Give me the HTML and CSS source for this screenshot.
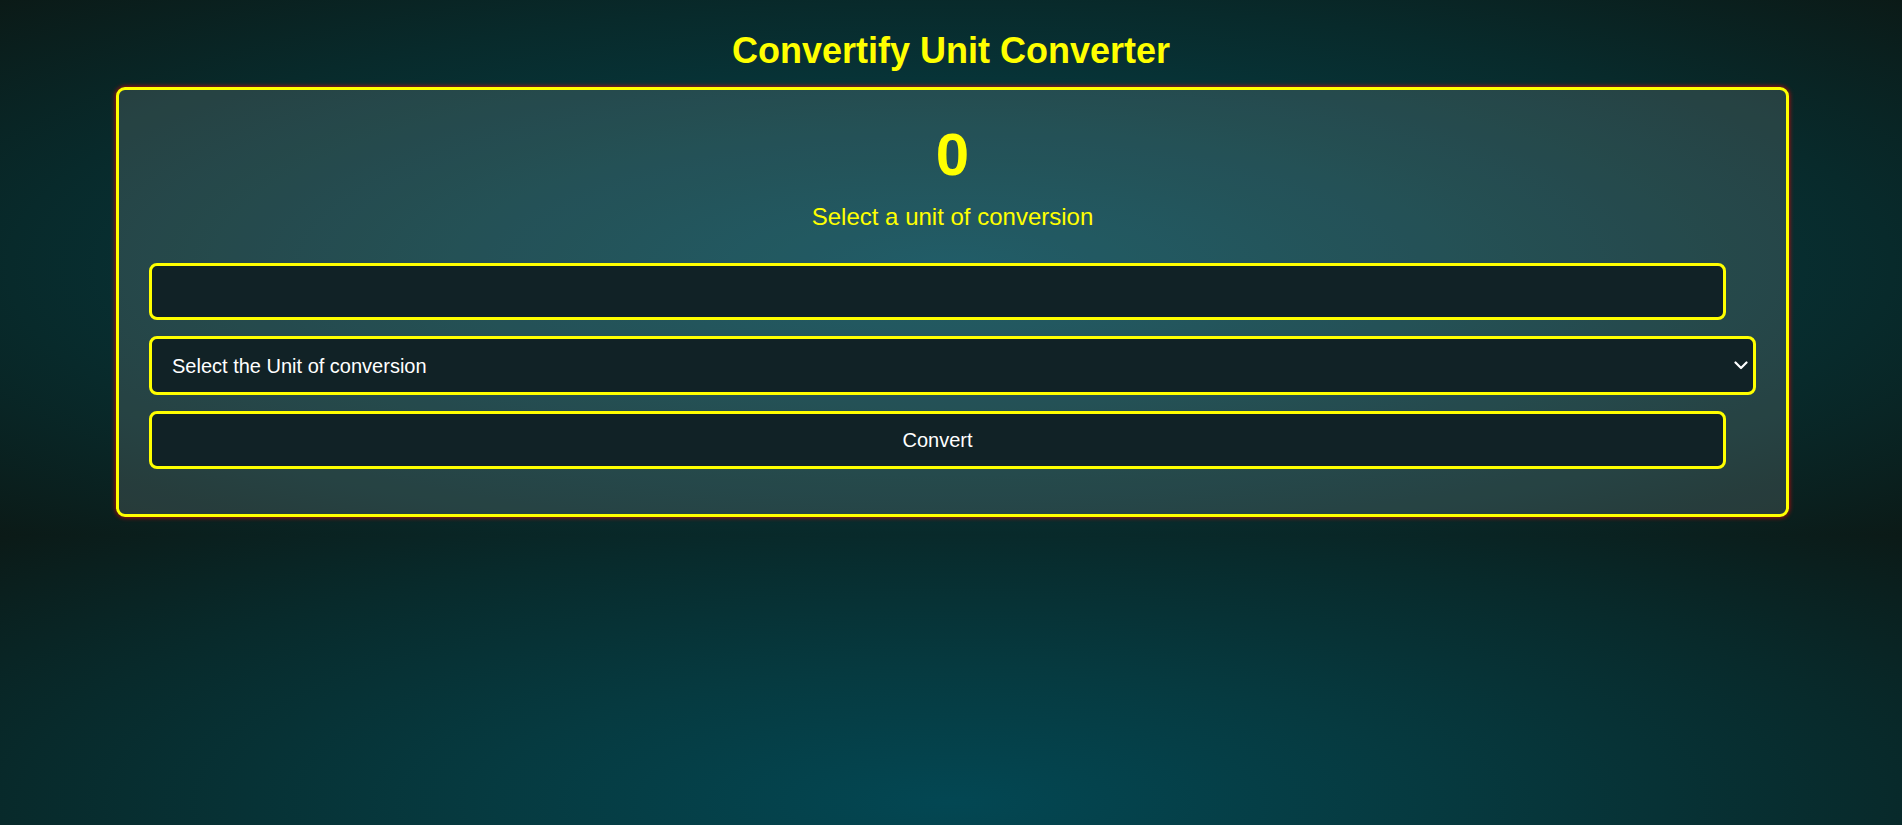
FILE: index.html
```html
<!DOCTYPE html>
<html lang="en">
<head>
<meta charset="utf-8">
<title>Convertify Unit Converter</title>
<link rel="stylesheet" href="styles.css">
</head>
<body>
  <h1 class="title">Convertify Unit Converter</h1>
  <main class="card">
    <div class="result">0</div>
    <p class="hint">Select a unit of conversion</p>
    <form class="form">
      <input class="field" type="number" aria-label="Value">
      <select class="field field-select" aria-label="Unit">
        <option>Select the Unit of conversion</option>
        <option>Kilometers to Miles</option>
        <option>Miles to Kilometers</option>
        <option>Celsius to Fahrenheit</option>
        <option>Fahrenheit to Celsius</option>
      </select>
      <button class="field field-button" type="button">Convert</button>
    </form>
  </main>
</body>
</html>
```
FILE: styles.css
```css
html {
  background-color: #0b1a17;
  background-image: radial-gradient(ellipse farthest-corner at 50% 50%, #034753 0%, #063a40 35%, #082a2b 70%, #0b1a17 100%);
  background-size: 100% 535px;
  background-repeat: repeat-y;
  min-height: 100%;
}

body {
  margin: 0;
  padding: 30px 0 18px;
  font-family: "Liberation Sans", Arial, sans-serif;
}

.title {
  margin: 0 0 15px;
  text-align: center;
  color: #ffff00;
  font-size: 36px;
  font-weight: bold;
  line-height: normal;
}

.card {
  box-sizing: border-box;
  width: 1673px;
  margin: 0 auto 0 116px;
  padding: 30px 30px 45px;
  border: 3px solid #ffff00;
  border-radius: 9px;
  background: rgba(255, 255, 255, 0.12);
  box-shadow: 0 0 5px rgba(255, 0, 0, 0.9);
  text-align: center;
}

.result {
  color: #ffff00;
  font-size: 60px;
  font-weight: bold;
  line-height: normal;
}

.hint {
  margin: 14px 0 32px;
  color: #ffff00;
  font-size: 24px;
  line-height: normal;
}

.form {
  display: flex;
  flex-direction: column;
  align-items: flex-start;
  gap: 16px;
}

.field {
  box-sizing: border-box;
  width: calc(100% - 30px);
  height: 57px;
  margin: 0;
  padding: 0 20px;
  border: 3px solid #ffff00;
  border-radius: 8px;
  background-color: #112226;
  color: #ffffff;
  font-family: "Liberation Sans", Arial, sans-serif;
  font-size: 20px;
  outline: none;
}

.field-select {
  width: 100%;
  height: 59px;
  padding: 0 30px 0 20px;
  -webkit-appearance: none;
  appearance: none;
  background-image: url("data:image/svg+xml,%3Csvg xmlns='http://www.w3.org/2000/svg' width='14' height='9' viewBox='0 0 14 9'%3E%3Cpath d='M1.5 1.5 L7 7 L12.5 1.5' fill='none' stroke='%23ffffff' stroke-width='2.2' stroke-linecap='round' stroke-linejoin='round'/%3E%3C/svg%3E");
  background-repeat: no-repeat;
  background-position: right 5px center;
}

.field-button {
  height: 58px;
  cursor: pointer;
  text-align: center;
}
```
